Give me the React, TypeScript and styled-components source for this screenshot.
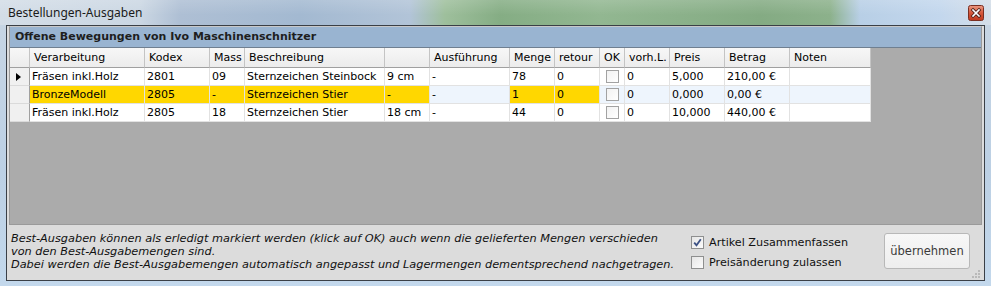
import React from 'react';
import styled, { createGlobalStyle } from 'styled-components';

const GlobalStyle = createGlobalStyle`
  html, body {
    margin: 0;
    padding: 0;
    background: #c4d6e8;
  }
  body {
    font-family: "DejaVu Sans", Verdana, sans-serif;
  }
`;

const Window = styled.div`
  width: 991px;
  height: 286px;
  box-sizing: border-box;
  display: flex;
  flex-direction: column;
  background: linear-gradient(to bottom, #c8d6e4 0%, #bcd0e4 60%, #c3d8ec 100%);
  overflow: hidden;
`;

const TitleBar = styled.div`
  height: 25px;
  flex: none;
  display: flex;
  align-items: center;
  justify-content: space-between;
  padding: 0 7px 0 8px;
  background:
    linear-gradient(to bottom, rgba(255, 255, 255, 0.15), rgba(255, 255, 255, 0) 60%),
    linear-gradient(
      to right,
      #d3dde7 0px,
      #cbd7e3 140px,
      #aebfd4 180px,
      #a3b9d1 300px,
      #b2c4d8 410px,
      #9ebf9c 445px,
      #85ad84 500px,
      #92b791 600px,
      #84ab83 760px,
      #8cb18b 830px,
      #b8cfe6 860px,
      #c3d7ed 940px,
      #d4dee8 991px
    );
`;

const Title = styled.span`
  font-family: "Noto Sans", "Liberation Sans", sans-serif;
  font-size: 12px;
  color: #1a1a1a;
`;

const CloseButton = styled.div`
  width: 16px;
  height: 16px;
  display: flex;
`;

const Client = styled.div`
  flex: 1;
  margin: 0 6px 5px 6px;
  border: 1px solid #3a3f46;
  background: #dcdcdc;
  display: flex;
  flex-direction: column;
  padding: 0 2px;
`;

const Panel = styled.div`
  height: 199px;
  box-sizing: border-box;
  border: 1px solid #9a9a9a;
  border-top-color: #c8c8c8;
  display: flex;
  flex-direction: column;
`;

const PanelTitle = styled.div`
  height: 21px;
  box-sizing: border-box;
  border-bottom: 1px solid #6f7f90;
  background: #99b4d1;
  font-weight: bold;
  font-size: 11px;
  line-height: 20px;
  padding-left: 5px;
  color: #1e1e1e;
`;

const GridArea = styled.div`
  flex: 1;
  background: #ababab;
`;

const Grid = styled.div`
  display: grid;
  grid-template-columns: 20px 115px 65px 35px 140px 45px 80px 45px 45px 25px 45px 55px 65px 81px;
  width: 861px;
  background: #ffffff;
  font-size: 11px;
  color: #000;
`;

const HeadCell = styled.div`
  height: 20px;
  box-sizing: border-box;
  border-right: 1px solid #c4c4c4;
  border-bottom: 1px solid #a0a0a0;
  background: linear-gradient(to bottom, #f7f7f7, #ececec);
  line-height: 19px;
  padding-left: 4px;
  white-space: nowrap;
  overflow: hidden;
`;

const RowHead = styled.div`
  height: 18px;
  box-sizing: border-box;
  border-right: 1px solid #a0a0a0;
  border-bottom: 1px solid #dadada;
  background: #f0f0f0;
  display: flex;
  align-items: center;
  padding-left: 6px;
`;

const Cell = styled.div<{ $tone?: 'gold' | 'alt' }>`
  height: 18px;
  box-sizing: border-box;
  border-right: 1px solid #e2e2e2;
  border-bottom: 1px solid #e2e2e2;
  background: ${(p) => (p.$tone === 'gold' ? '#ffd700' : p.$tone === 'alt' ? '#eef5fd' : '#ffffff')};
  line-height: 17px;
  padding-left: 2px;
  white-space: nowrap;
  overflow: hidden;
`;

const CheckCell = styled(Cell)`
  display: flex;
  align-items: center;
  justify-content: center;
  padding-left: 0;
`;

const GridCheck = styled.span`
  width: 13px;
  height: 13px;
  box-sizing: border-box;
  border: 1px solid #a2a2a2;
  background: linear-gradient(135deg, #f2f2f2, #ffffff);
`;

const Pointer = styled.span`
  width: 0;
  height: 0;
  border-top: 4.5px solid transparent;
  border-bottom: 4.5px solid transparent;
  border-left: 5px solid #000;
`;

const Footer = styled.div`
  flex: 1;
  display: flex;
  align-items: flex-start;
  position: relative;
`;

const Note = styled.div`
  width: 680px;
  padding: 7px 0 0 2px;
  font-size: 11.3px;
  font-style: italic;
  line-height: 13px;
  color: #111;
`;

const Options = styled.div`
  width: 193px;
  padding-top: 7px;
  display: flex;
  flex-direction: column;
`;

const Option = styled.label`
  height: 20px;
  display: flex;
  align-items: center;
  gap: 5px;
  font-size: 11.2px;
  color: #111;
`;

const Box = styled.span`
  width: 13px;
  height: 13px;
  box-sizing: border-box;
  border: 1px solid #8e8f8f;
  background: linear-gradient(135deg, #e6e6e6, #fbfbfb);
  display: flex;
  align-items: center;
  justify-content: center;
`;

const Button = styled.button`
  margin-top: 8px;
  width: 86px;
  height: 36px;
  box-sizing: border-box;
  border: 1px solid #b8b8b8;
  border-radius: 3px;
  background: linear-gradient(to bottom, #f7f7f7, #eeeeee);
  font-family: "DejaVu Sans", Verdana, sans-serif;
  font-size: 11.5px;
  color: #3a3a3a;
  padding: 0;
`;

const Grip = styled.svg`
  position: absolute;
  right: 2px;
  bottom: 2px;
`;

type Row = {
  cells: string[];
  current?: boolean;
  gold?: boolean;
};

const rows: Row[] = [
  {
    cells: ['Fräsen inkl.Holz', '2801', '09', 'Sternzeichen Steinbock', '9 cm', '-', '78', '0', '', '0', '5,000', '210,00 €', ''],
    current: true,
  },
  {
    cells: ['BronzeModell', '2805', '-', 'Sternzeichen Stier', '-', '-', '1', '0', '', '0', '0,000', '0,00 €', ''],
    gold: true,
  },
  {
    cells: ['Fräsen inkl.Holz', '2805', '18', 'Sternzeichen Stier', '18 cm', '-', '44', '0', '', '0', '10,000', '440,00 €', ''],
  },
];

const headers = ['', 'Verarbeitung', 'Kodex', 'Mass', 'Beschreibung', '', 'Ausführung', 'Menge', 'retour', 'OK', 'vorh.L.', 'Preis', 'Betrag', 'Noten'];

// columns that turn gold on a highlighted row
const goldCols = [0, 1, 2, 3, 4, 6, 7];

function toneFor(row: Row, i: number): 'gold' | 'alt' | undefined {
  if (!row.gold) return undefined;
  return goldCols.includes(i) ? 'gold' : 'alt';
}

export default function App() {
  return (
    <>
      <GlobalStyle />
      <Window>
        <TitleBar>
          <Title>Bestellungen-Ausgaben</Title>
          <CloseButton>
            <svg width="16" height="16" viewBox="0 0 16 16">
              <defs>
                <linearGradient id="cb" x1="0" y1="0" x2="0" y2="1">
                  <stop offset="0" stopColor="#eb9a83" />
                  <stop offset="0.5" stopColor="#d5573b" />
                  <stop offset="1" stopColor="#c0391d" />
                </linearGradient>
              </defs>
              <rect x="0.5" y="0.5" width="15" height="15" rx="2" fill="url(#cb)" stroke="#7a2f22" />
              <path d="M5 5 L11 11 M11 5 L5 11" stroke="#4a2018" strokeWidth="3.2" strokeLinecap="square" />
              <path d="M5 5 L11 11 M11 5 L5 11" stroke="#ffffff" strokeWidth="1.6" strokeLinecap="square" />
            </svg>
          </CloseButton>
        </TitleBar>
        <Client>
          <Panel>
            <PanelTitle>Offene Bewegungen von Ivo Maschinenschnitzer</PanelTitle>
            <GridArea>
              <Grid>
                {headers.map((h, i) => (
                  <HeadCell key={i}>{h}</HeadCell>
                ))}
                {rows.map((row, r) => (
                  <React.Fragment key={r}>
                    <RowHead>{row.current && <Pointer />}</RowHead>
                    {row.cells.map((c, i) =>
                      i === 8 ? (
                        <CheckCell key={i} $tone={toneFor(row, i)}>
                          <GridCheck />
                        </CheckCell>
                      ) : (
                        <Cell key={i} $tone={toneFor(row, i)}>
                          {c}
                        </Cell>
                      )
                    )}
                  </React.Fragment>
                ))}
              </Grid>
            </GridArea>
          </Panel>
          <Footer>
            <Note>
              Best-Ausgaben können als erledigt markiert werden (klick auf OK) auch wenn die gelieferten Mengen verschieden
              <br />
              von den Best-Ausgabemengen sind.
              <br />
              Dabei werden die Best-Ausgabemengen automatisch angepasst und Lagermengen dementsprechend nachgetragen.
            </Note>
            <Options>
              <Option>
                <Box>
                  <svg width="9" height="9" viewBox="0 0 9 9">
                    <path d="M1.2 4.6 L3.5 7.2 L7.8 1.2" fill="none" stroke="#3d5285" strokeWidth="1.8" />
                  </svg>
                </Box>
                Artikel Zusammenfassen
              </Option>
              <Option>
                <Box />
                Preisänderung zulassen
              </Option>
            </Options>
            <Button>übernehmen</Button>
            <Grip width="8" height="8" viewBox="0 0 8 8">
              {[
                [6, 0],
                [6, 3],
                [3, 3],
                [6, 6],
                [3, 6],
                [0, 6],
              ].map(([x, y], i) => (
                <rect key={i} x={x} y={y} width="2" height="2" fill="#b9b9b9" />
              ))}
            </Grip>
          </Footer>
        </Client>
      </Window>
    </>
  );
}
